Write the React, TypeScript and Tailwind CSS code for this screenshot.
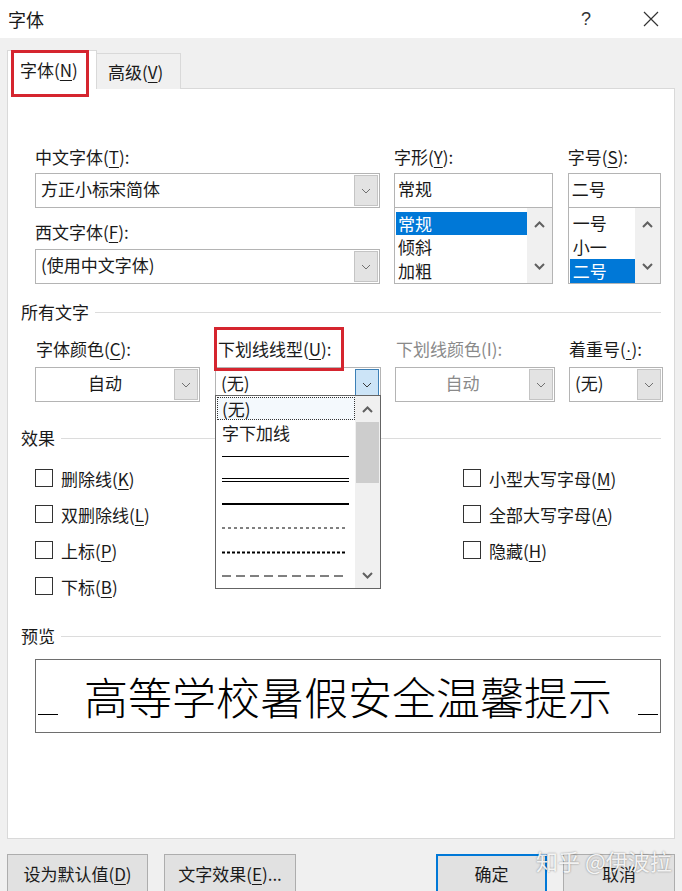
import React from "react";

const Chev = ({ color = "#606060" }: { color?: string }) => (
  <svg width="10" height="6" viewBox="0 0 10 6">
    <path d="M1 1 L5 5 L9 1" fill="none" stroke={color} strokeWidth="1" />
  </svg>
);

const ArrowUp = () => (
  <svg width="11" height="7" viewBox="0 0 11 7">
    <path d="M1 6 L5.5 1.5 L10 6" fill="none" stroke="#606060" strokeWidth="2" />
  </svg>
);
const ArrowDown = () => (
  <svg width="11" height="7" viewBox="0 0 11 7">
    <path d="M1 1 L5.5 5.5 L10 1" fill="none" stroke="#606060" strokeWidth="2" />
  </svg>
);

const K = ({ k }: { k: string }) => <span className="underline underline-offset-[3px] decoration-1">{k}</span>;

const Label = ({ children, gray }: { children: React.ReactNode; gray?: boolean }) => (
  <div className={`h-[24px] leading-[24px] text-[17px] whitespace-nowrap ${gray ? "text-[#8a8a8a]" : "text-[#1a1a1a]"}`}>{children}</div>
);

const Combo = ({
  text,
  w,
  center,
  gray,
  active,
}: {
  text: string;
  w: string;
  center?: boolean;
  gray?: boolean;
  active?: boolean;
}) => (
  <div className={`${w} h-[35px] border border-[#b4b4b4] bg-white flex items-center`}>
    <div
      className={`flex-1 text-[17px] leading-[20px] -mt-[3px] ${center ? "text-center" : "pl-[5px]"} ${gray ? "text-[#8a8a8a]" : "text-[#1a1a1a]"}`}
    >
      {text}
    </div>
    <div
      className={`w-[24px] h-[31px] mr-[1px] flex items-center justify-center border ${
        active ? "bg-[#cce4f7] border-[#3d80b6]" : "bg-[#e3e3e3] border-[#c4c4c4]"
      }`}
    >
      <Chev color={active ? "#3a3a3a" : "#707070"} />
    </div>
  </div>
);

const SectionHead = ({ title }: { title: string }) => (
  <div className="h-[24px] flex items-center">
    <span className="text-[17px] leading-[24px] text-[#1a1a1a]">{title}</span>
    <div className="flex-1 h-px bg-[#dcdcdc] ml-[6px]" />
  </div>
);

const Check = ({ children }: { children: React.ReactNode }) => (
  <div className="h-[36px] flex items-center">
    <div className="w-[18px] h-[18px] border border-[#333] bg-white" />
    <span className="ml-[8px] text-[17px] leading-none text-[#1a1a1a] whitespace-nowrap">{children}</span>
  </div>
);

export default function App() {
  return (
    <div className="relative w-[682px] h-[891px] overflow-hidden bg-[#f0f0f0] font-['Noto_Sans_CJK_SC','Microsoft_YaHei',sans-serif] text-[#1a1a1a]">
      {/* Title bar */}
      <div className="h-[38px] bg-white flex items-center pl-[8px]">
        <span className="text-[18px] leading-none">字体</span>
        <span className="ml-auto text-[18px] leading-none text-[#333] mr-[52px] font-['Liberation_Sans',sans-serif]">?</span>
        <svg width="16" height="16" viewBox="0 0 16 16" className="mr-[23px]">
          <path d="M1 1 L15 15 M15 1 L1 15" stroke="#333" strokeWidth="1.2" />
        </svg>
      </div>

      {/* Tabs */}
      <div className="flex items-end ml-[7px] mt-[12px] h-[39px] relative z-10">
        <div className="w-[90px] h-[39px] bg-white border border-[#d9d9d9] border-b-0 flex items-center pl-[12px] text-[17px]">
          字体(<K k="N" />)
        </div>
        <div className="w-[84px] h-[36px] bg-[#f0f0f0] border border-[#d9d9d9] border-l-0 border-b-0 flex items-center pl-[11px] text-[17px]">
          高级(<K k="V" />)
        </div>
      </div>

      {/* Panel */}
      <div className="mx-[7px] -mt-[1px] w-[668px] h-[751px] bg-white border border-[#d9d9d9] pl-[13px] pr-[13px] pt-[56px] flex flex-col">
        {/* Top fonts row */}
        <div className="flex pl-[14px]">
          <div className="w-[345px] flex flex-col">
            <Label>
              中文字体(<K k="T" />):
            </Label>
            <div className="mt-[4px]">
              <Combo text="方正小标宋简体" w="w-[345px]" />
            </div>
            <div className="mt-[12px]">
              <Label>
                西文字体(<K k="F" />):
              </Label>
            </div>
            <div className="mt-[5px]">
              <Combo text="(使用中文字体)" w="w-[345px]" />
            </div>
          </div>

          <div className="w-[160px] ml-[14px] flex flex-col">
            <Label>
              字形(<K k="Y" />):
            </Label>
            <div className="mt-[4px] h-[35px] border border-[#b4b4b4] flex items-center pl-[3px] pb-[3px] text-[17px]">常规</div>
            <div className="-mt-[1px] h-[77px] border border-[#b4b4b4] flex">
              <div className="flex-1 pt-[4px] pl-[1px] text-[17px]">
                <div className="h-[23px] leading-[23px] bg-[#0078d7] text-white pl-[2px]">常规</div>
                <div className="h-[24px] leading-[24px] pl-[2px]">倾斜</div>
                <div className="h-[24px] leading-[24px] pl-[2px]">加粗</div>
              </div>
              <div className="w-[25px] bg-[#f0f0f0] flex flex-col items-center justify-between py-[13px]">
                <ArrowUp />
                <ArrowDown />
              </div>
            </div>
          </div>

          <div className="w-[94px] ml-[15px] flex flex-col">
            <Label>
              字号(<K k="S" />):
            </Label>
            <div className="mt-[4px] h-[35px] border border-[#b4b4b4] flex items-center pl-[3px] pb-[3px] text-[17px]">二号</div>
            <div className="-mt-[1px] h-[77px] border border-[#b4b4b4] flex">
              <div className="flex-1 pt-[3px] pl-[1px] text-[17px]">
                <div className="h-[24px] leading-[24px] pl-[3px]">一号</div>
                <div className="h-[24px] leading-[24px] pl-[3px]">小一</div>
                <div className="h-[24px] leading-[24px] bg-[#0078d7] text-white pl-[3px]">二号</div>
              </div>
              <div className="w-[25px] bg-[#f0f0f0] flex flex-col items-center justify-between py-[13px]">
                <ArrowUp />
                <ArrowDown />
              </div>
            </div>
          </div>
        </div>

        {/* 所有文字 */}
        <div className="mt-[16px]">
          <SectionHead title="所有文字" />
        </div>
        <div className="mt-[13px] flex pl-[14px]">
          <div className="w-[165px]">
            <div className="pl-[1px]">
              <Label>
                字体颜色(<K k="C" />):
              </Label>
            </div>
            <div className="mt-[6px]">
              <Combo text="自动" w="w-[165px]" center />
            </div>
          </div>
          <div className="w-[166px] ml-[15px]">
            <div className="pl-[3px]">
              <Label>
                下划线线型(<K k="U" />):
              </Label>
            </div>
            <div className="mt-[6px]">
              <Combo text="(无)" w="w-[166px]" active />
            </div>
          </div>
          <div className="w-[160px] ml-[14px]">
            <div className="pl-[1px]">
              <Label gray>下划线颜色(I):</Label>
            </div>
            <div className="mt-[6px]">
              <Combo text="自动" w="w-[160px]" center gray />
            </div>
          </div>
          <div className="w-[94px] ml-[14px]">
            <Label>
              着重号(
              <span className="underline underline-offset-[3px] decoration-1 font-['Liberation_Sans',sans-serif]">·</span>
              ):
            </Label>
            <div className="mt-[6px]">
              <Combo text="(无)" w="w-[94px]" />
            </div>
          </div>
        </div>

        {/* 效果 */}
        <div className="mt-[24px]">
          <SectionHead title="效果" />
        </div>
        <div className="mt-[10px] flex pl-[14px]">
          <div className="w-[428px] flex flex-col">
            <Check>
              删除线(<K k="K" />)
            </Check>
            <Check>
              双删除线(<K k="L" />)
            </Check>
            <Check>
              上标(<K k="P" />)
            </Check>
            <Check>
              下标(<K k="B" />)
            </Check>
          </div>
          <div className="flex flex-col">
            <Check>
              小型大写字母(<K k="M" />)
            </Check>
            <Check>
              全部大写字母(<K k="A" />)
            </Check>
            <Check>
              隐藏(<K k="H" />)
            </Check>
          </div>
        </div>

        {/* 预览 */}
        <div className="mt-[20px]">
          <SectionHead title="预览" />
        </div>
        <div className="mt-[11px] ml-[14px] h-[74px] border border-[#6e6e6e] relative flex items-center justify-center">
          <span className="text-[44px] leading-none text-black font-light">高等学校暑假安全温馨提示</span>
          <div className="absolute left-[2px] top-[54px] w-[20px] h-px bg-black" />
          <div className="absolute right-[2px] top-[54px] w-[20px] h-px bg-black" />
        </div>
      </div>

      {/* Bottom buttons */}
      <div className="mt-[15px] flex">
        <div className="ml-[7px] w-[141px] h-[40px] bg-[#e1e1e1] border border-[#adadad] flex items-center justify-center text-[17px]">
          设为默认值(<K k="D" />)
        </div>
        <div className="ml-[16px] w-[132px] h-[40px] bg-[#e1e1e1] border border-[#adadad] flex items-center justify-center text-[17px]">
          文字效果(<K k="E" />)...
        </div>
        <div className="ml-[140px] w-[111px] h-[40px] bg-[#e1e1e1] border-2 border-[#0078d7] flex items-center justify-center text-[17px]">
          确定
        </div>
        <div className="ml-[16px] w-[112px] h-[40px] bg-[#e1e1e1] border border-[#adadad] flex items-center justify-center text-[17px]">
          取消
        </div>
      </div>

      {/* Watermark */}
      <div className="absolute left-[536px] top-[847px] text-[22px] leading-[26px] text-[rgba(255,255,255,0.9)] [text-shadow:0_0_2px_rgba(0,0,0,0.45)] whitespace-nowrap">
        知乎 @伊波拉
      </div>

      {/* Open dropdown list */}
      <div className="absolute left-[215px] top-[395px] w-[166px] h-[194px] bg-white border border-[#646464] flex">
        <div className="flex-1 pt-[1px] pl-[1px]">
          <div className="h-[23px] border border-dotted border-[#333] bg-[#f4f9fd] flex items-center pl-[4px] text-[17px] leading-none">(无)</div>
          <div className="h-[24px] flex items-center pl-[5px] text-[17px] leading-none">字下加线</div>
          <div className="pl-[5px] pr-[6px]">
            <div className="h-[24px] flex items-center">
              <div className="w-full h-px bg-black" />
            </div>
            <div className="h-[24px] flex items-center">
              <div className="w-full h-[4px] border-t border-b border-black" />
            </div>
            <div className="h-[24px] flex items-center">
              <div className="w-full h-[2px] bg-black" />
            </div>
            <div className="h-[24px] flex items-center">
              <svg width="124" height="2" className="w-full">
                <line x1="0" y1="1" x2="124" y2="1" stroke="#000" strokeWidth="1" strokeDasharray="3 3" />
              </svg>
            </div>
            <div className="h-[24px] flex items-center">
              <svg width="124" height="3" className="w-full">
                <line x1="0" y1="1.5" x2="124" y2="1.5" stroke="#000" strokeWidth="2" strokeDasharray="3 2" />
              </svg>
            </div>
            <div className="h-[24px] flex items-center">
              <svg width="124" height="2" className="w-full">
                <line x1="0" y1="1" x2="124" y2="1" stroke="#000" strokeWidth="1" strokeDasharray="9 5" />
              </svg>
            </div>
          </div>
        </div>
        <div className="w-[25px] bg-[#f0f0f0] flex flex-col items-center">
          <div className="h-[26px] flex items-center justify-center">
            <ArrowUp />
          </div>
          <div className="w-[23px] h-[61px] bg-[#cdcdcd]" />
          <div className="flex-1" />
          <div className="h-[26px] flex items-center justify-center">
            <ArrowDown />
          </div>
        </div>
      </div>

      {/* Red highlight boxes */}
      <div className="absolute left-[11px] top-[50px] w-[78px] h-[47px] border-[3px] border-[#d5252f] z-20" />
      <div className="absolute left-[214px] top-[327px] w-[130px] h-[44px] border-[3px] border-[#d5252f] z-20" />
    </div>
  );
}
